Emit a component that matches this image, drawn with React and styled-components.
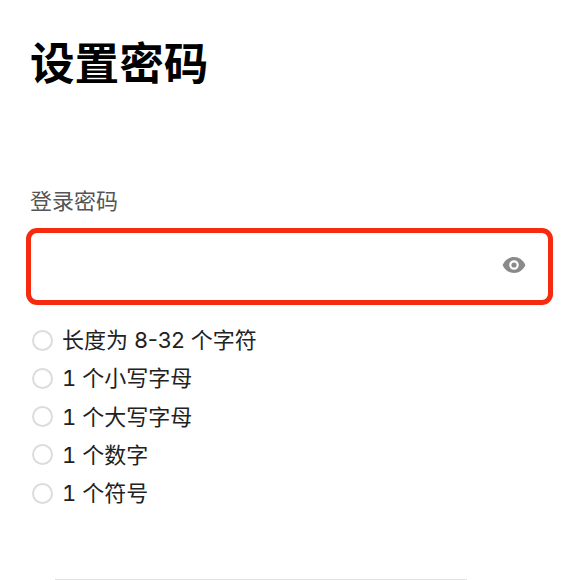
import React from 'react';
import styled, { createGlobalStyle } from 'styled-components';

const GlobalStyle = createGlobalStyle`
  html, body {
    margin: 0;
    padding: 0;
    background: #fff;
    font-family: "Inter", "Noto Sans CJK SC", sans-serif;
  }
`;

const Page = styled.div`
  width: 585px;
  height: 580px;
  overflow: hidden;
  box-sizing: border-box;
  padding: 36px 32px 0 30px;
  display: flex;
  flex-direction: column;
`;

const Title = styled.h1`
  margin: 0;
  height: 56px;
  font-size: 44.6px;
  line-height: 56px;
  font-weight: 700;
  color: #000;
`;

const Label = styled.label`
  margin-top: 97px;
  height: 24px;
  font-size: 22px;
  line-height: 24px;
  color: #555;
`;

const Field = styled.div`
  margin: 15px 0 0 -4px;
  height: 77px;
  box-sizing: border-box;
  border: 5px solid #f52a0e;
  border-radius: 11px;
  display: flex;
  align-items: center;
  justify-content: flex-end;
  padding: 0 22px 3px 0;
`;

const Rules = styled.ul`
  list-style: none;
  margin: 22px 0 0 2px;
  padding: 0;
  display: flex;
  flex-direction: column;
  gap: 12.3px;
`;

const Rule = styled.li`
  display: flex;
  align-items: center;
  gap: 9px;
  height: 26px;
  font-size: 22px;
  line-height: 26px;
  color: #222;

  &:not(:first-child) {
    font-variant-numeric: tabular-nums;
  }
`;

const Dot = styled.span`
  width: 21px;
  height: 21px;
  box-sizing: border-box;
  border: 2px solid #dcdcdc;
  border-radius: 50%;
  flex: none;
`;

const Divider = styled.div`
  position: absolute;
  left: 55px;
  width: 412px;
  top: 579px;
  height: 1px;
  background: #e2e2e2;
`;

const EyeIcon = () => (
  <svg width="24" height="18" viewBox="0 0 24 18">
    <path fill="#8a8a8a" fillRule="evenodd" d="M12 1C6.8 1 2.6 4.3 0.6 9c2 4.7 6.2 8 11.4 8s9.400-3.300 11.400-8C21.400 4.300 17.200 1 12 1zm0 3.200a4.800 4.800 0 1 1 0 9.600 4.800 4.800 0 0 1 0-9.600z" />
    <circle cx="12" cy="9" r="2.600" fill="#8a8a8a" />
  </svg>
);

const rules = ['长度为 8-32 个字符', '1 个小写字母', '1 个大写字母', '1 个数字', '1 个符号'];

const App = () => (
  <Page>
    <GlobalStyle />
    <Title>设置密码</Title>
    <Label>登录密码</Label>
    <Field>
      <EyeIcon />
    </Field>
    <Rules>
      {rules.map((rule) => (
        <Rule key={rule}>
          <Dot />
          {rule}
        </Rule>
      ))}
    </Rules>
    <Divider />
  </Page>
);

export default App;
